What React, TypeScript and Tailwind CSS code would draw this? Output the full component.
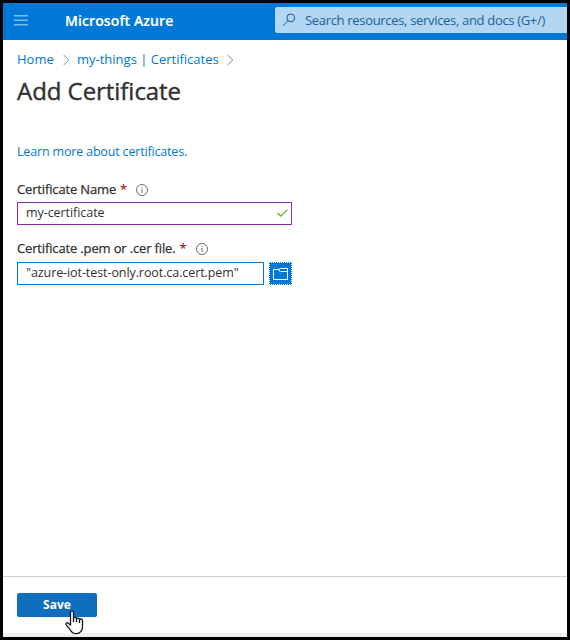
import React from "react";

function Chevron() {
  return (
    <svg width="7" height="12" viewBox="0 0 7 12" fill="none" stroke="#8a8886" strokeWidth="1" className="shrink-0">
      <path d="M.7 1 5.7 6 .7 11" />
    </svg>
  );
}

function Info() {
  return (
    <svg width="12" height="12" viewBox="0 0 12 12" fill="none" stroke="#605e5c" strokeWidth="0.9">
      <circle cx="6" cy="6" r="5.5" />
      <path d="M6 5v4M6 3v1.1" />
    </svg>
  );
}

function Label({ text }: { text: string }) {
  return (
    <div className="flex h-[18px] items-center whitespace-nowrap text-[13px] text-[#323130]">
      <span className="tracking-[-0.15px] [-webkit-text-stroke:0.25px_#323130]">{text}</span>
      <span className="ml-1 w-[6px] text-[13px] font-semibold text-[#a4262c]">*</span>
      <span className="ml-[10px] flex">
        <Info />
      </span>
    </div>
  );
}

export default function App() {
  return (
    <div className="flex h-[640px] w-[570px] flex-col overflow-hidden border-[3px] border-black bg-white font-['Open_Sans','Noto_Sans',sans-serif] text-[#323130]">
      <header className="flex h-[37px] shrink-0 items-start bg-[#0078d7]">
        <svg width="14" height="11" viewBox="0 0 14 11" className="ml-[11px] mt-3 shrink-0" fill="#80bbeb">
          <path d="M0 0h14v1.5H0zM0 4.5h14V6H0zM0 9h14v1.5H0z" />
        </svg>
        <div className="ml-[37px] mt-[7px] w-[210px] shrink-0 whitespace-nowrap text-[14px] font-semibold leading-[22px] tracking-[0.1px] text-white [-webkit-text-stroke:0.2px_white]">
          <span>Microsoft Azure</span>
        </div>
        <div className="mt-1 flex h-[26px] flex-1 items-center overflow-hidden rounded-l-[2px] bg-[#b3d6f3] pl-[7px] text-[#20609b]">
          <svg width="14" height="14" viewBox="0 0 14 14" fill="none" stroke="#155a98" strokeWidth="1" className="shrink-0">
            <circle cx="8.8" cy="4.9" r="3.9" />
            <path d="M6 7.8.8 13" />
          </svg>
          <span className="ml-[9px] mt-px whitespace-nowrap text-[13px] tracking-[-0.32px]">Search resources, services, and docs (G+/)</span>
        </div>
      </header>
      <main className="flex flex-1 flex-col pl-[14px]">
        <nav className="mt-[10px] flex h-[19px] items-center whitespace-nowrap text-[13px] text-[#0078d4]">
          <span className="mt-px w-[46px]">Home</span>
          <Chevron />
          <span className="ml-[7px] mt-px w-[150px]">my-things | Certificates</span>
          <Chevron />
        </nav>
        <h1 className="mt-[5px] h-[34px] whitespace-nowrap text-[24px] leading-[34px] tracking-[-0.05px] [-webkit-text-stroke:0.4px_#323130]">Add Certificate</h1>
        <a className="mt-[35px] h-[18px] whitespace-nowrap text-[12.5px] leading-[18px] tracking-[-0.17px] text-[#0078d4]">Learn more about certificates.</a>
        <div className="mt-[20px]">
          <Label text="Certificate Name" />
        </div>
        <div className="mt-[3px] flex h-[23px] w-[275px] items-center justify-between border border-[#8a2da5] pl-2 pr-[3px] text-[12.5px] leading-[18px] tracking-[-0.06px]">
          <span className="-mt-[2px]">my-certificate</span>
          <svg width="11" height="8" viewBox="0 0 11 8" fill="none" stroke="#6bb42d" strokeWidth="1.3" className="-mt-px">
            <path d="M.6 4 3.8 7 10.5.6" />
          </svg>
        </div>
        <div className="mt-[15px]">
          <Label text="Certificate .pem or .cer file." />
        </div>
        <div className="mt-[4px] flex h-[23px] gap-[5px]">
          <div className="flex w-[247px] items-center whitespace-nowrap border border-[#0078d4] pl-2 text-[12.5px] leading-[18px] tracking-[-0.08px]">
            <span className="-mt-[2px]">"azure-iot-test-only.root.ca.cert.pem"</span>
          </div>
          <button className="flex w-[23px] items-center justify-center border border-dotted border-white bg-[#0078d4]">
            <svg width="15" height="12" viewBox="0 0 15 12" fill="none" stroke="#fff" strokeWidth="1">
              <path d="M6 1.5H.5V11.5h14V.5h-7L6 1.5v1.2l1.5.8h7" />
            </svg>
          </button>
        </div>
      </main>
      <footer className="flex h-[61px] shrink-0 flex-col justify-between border-t border-[#d2d0ce]">
        <div className="relative ml-[14px] mt-4 w-20">
          <button className="flex h-6 w-20 items-center justify-center rounded-[2px] bg-[#106ebe] text-[12px] font-bold text-white">Save</button>
          <svg width="19" height="25" viewBox="0 0 19 25" className="absolute left-[48px] top-[17px]" fill="#fff" stroke="#111425" strokeWidth="1.3" strokeLinejoin="round">
            <path d="M5.5 15V2.5C5.5.3 8.5.3 8.5 2.5V8c.6-1 3-.8 3 .6.8-.9 3-.6 3 .8 1-.8 3-.4 3 1.3v6.1c0 3.8-2.5 6.9-6 6.9-3.2 0-5-1.5-6.4-4L1.2 14.8c-.9-1.7 1.2-2.7 2.3-1.4z" />
            <path d="M8.5 8v4M11.5 8.6V12M14.5 9.4V13" />
          </svg>
        </div>
        <div className="h-1 bg-[#f0f0f0]" />
      </footer>
    </div>
  );
}
